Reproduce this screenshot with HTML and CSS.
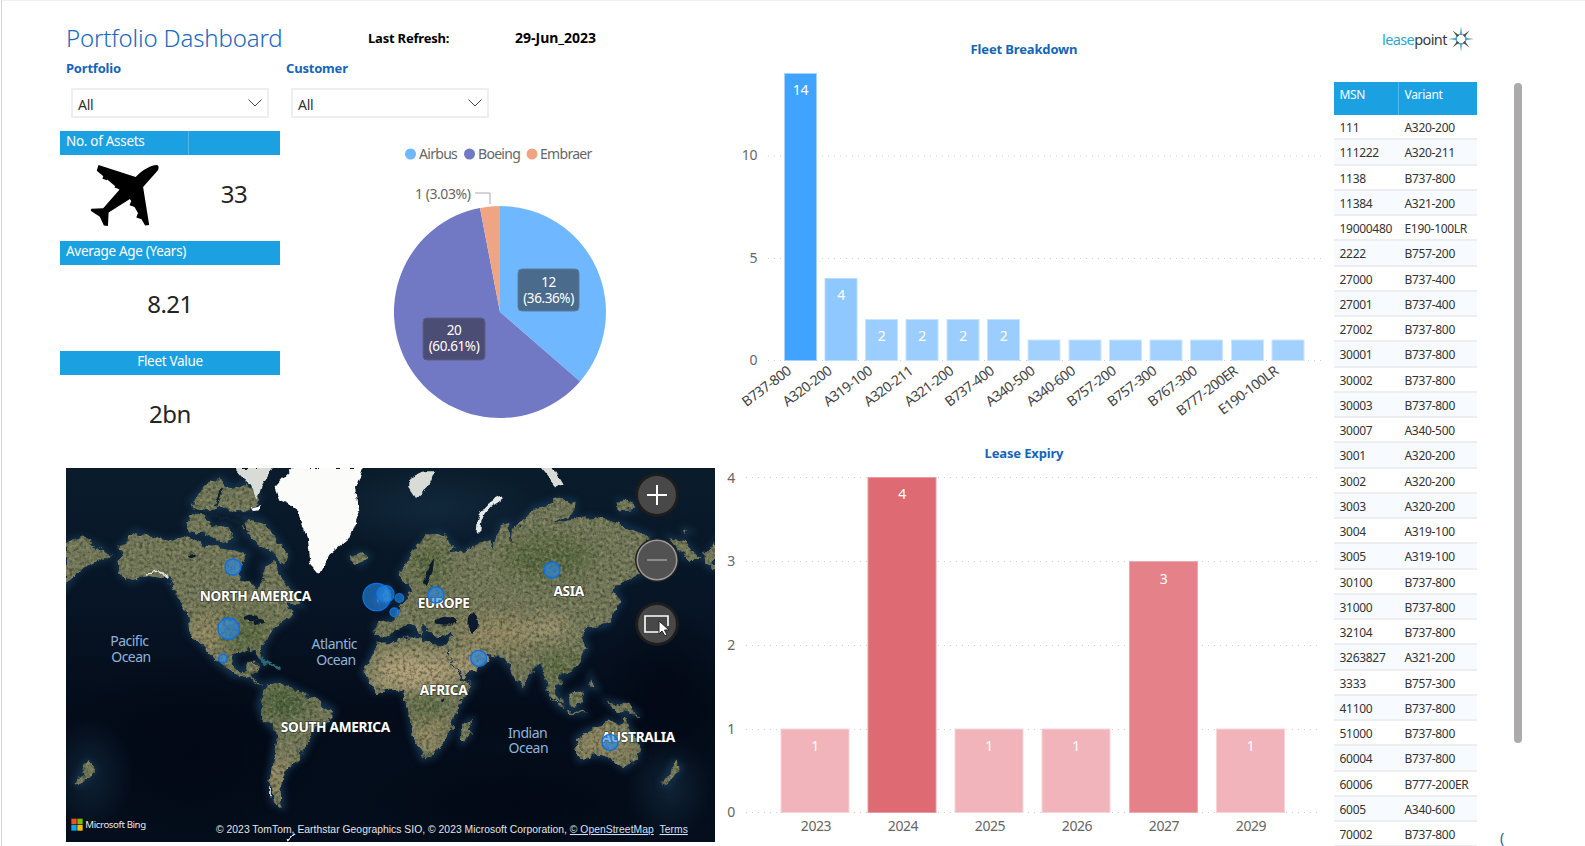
FILE: index.html
```html
<!DOCTYPE html>
<html lang="en">
<head>
<meta charset="utf-8">
<title>Portfolio Dashboard</title>
<link rel="stylesheet" href="styles.css">
</head>
<body>
<div class="page">
  <section class="left">
    <header class="head">
      <h1 class="title">Portfolio Dashboard</h1>
      <div class="refresh-label">Last Refresh:</div>
      <div class="refresh-date">29-Jun_2023</div>
    </header>
    <div class="filters">
      <div class="filter">
        <div class="filter-label">Portfolio</div>
        <div class="dropdown"><span>All</span>
          <svg class="chev" viewBox="0 0 14 8"><path d="M0.5 0.5 L7 7 L13.5 0.5"/></svg></div>
      </div>
      <div class="filter">
        <div class="filter-label">Customer</div>
        <div class="dropdown"><span>All</span>
          <svg class="chev" viewBox="0 0 14 8"><path d="M0.5 0.5 L7 7 L13.5 0.5"/></svg></div>
      </div>
    </div>
    <div class="mid-row">
      <div class="kpis">
        <div class="kpi-bar split"><span class="cell-a">No. of Assets</span><span class="cell-b"></span></div>
        <div class="kpi-body split-body">
          <div class="plane-cell">
            <svg class="plane" viewBox="90 100 210 190">
              <path d="M290 105 C298 105 298 118 290 125 L250 170 L268 282 L256 284 L211 205 L148 245 L146 285 L134 284 L122 258 L95 240 L97 234 L132 233 L180 178 L113 122 L118 105 L228 140 C250 118 275 105 290 105Z"/>
              <rect x="132" y="132" width="14" height="16" transform="rotate(20 139 140)"/>
              <rect x="168" y="158" width="14" height="16" transform="rotate(20 175 166)"/>
              <rect x="212" y="214" width="16" height="13" transform="rotate(20 220 220)"/>
              <rect x="232" y="250" width="16" height="13" transform="rotate(20 240 256)"/>
            </svg>
          </div>
          <div class="kpi-val side">33</div>
        </div>
        <div class="kpi-bar">Average Age (Years)</div>
        <div class="kpi-body"><div class="kpi-val">8.21</div></div>
        <div class="kpi-bar center">Fleet Value</div>
        <div class="kpi-body"><div class="kpi-val">2bn</div></div>
      </div>
      <svg class="pie" viewBox="290 131 330 330">
        <circle class="lg-a" cx="410.500" cy="154" r="5.500"/>
        <text class="legend" x="419" y="159">Airbus</text>
        <circle class="lg-b" cx="469.500" cy="154" r="5.500"/>
        <text class="legend" x="478" y="159">Boeing</text>
        <circle class="lg-c" cx="532" cy="154" r="5.500"/>
        <text class="legend" x="540" y="159">Embraer</text>
        <text class="legend wide" x="415" y="199">1 (3.03%)</text>
        <path class="leader" d="M475 193 H490 V204"/>
        <path class="lg-a" d="M500 312 V206 A106 106 0 0 1 580.100 381.400 Z"/>
        <path class="lg-b" d="M500 312 L580.100 381.400 A106 106 0 1 1 480 207.900 Z"/>
        <path class="lg-c" d="M500 312 L480 207.900 A106 106 0 0 1 500 206 Z"/>
        <rect class="tag-a" x="518" y="269" width="61" height="42" rx="4"/>
        <text class="tag" x="548.500" y="287">12</text>
        <text class="tag" x="548.500" y="303">(36.36%)</text>
        <rect class="tag-b" x="423" y="318" width="62" height="42" rx="4"/>
        <text class="tag" x="454" y="335">20</text>
        <text class="tag" x="454" y="351">(60.61%)</text>
      </svg>
    </div>
    <div class="map">
      <svg class="map-svg" viewBox="0 0 1947 1122">
        <defs>
          <linearGradient id="ocean" x1="0" y1="0" x2="0" y2="1">
            <stop offset="0" stop-color="#0a1c2b"/>
            <stop offset=".35" stop-color="#071526"/>
            <stop offset=".65" stop-color="#040c1a"/>
            <stop offset="1" stop-color="#040e1c"/>
          </linearGradient>
          <radialGradient id="deep">
            <stop offset="0" stop-color="#020814" stop-opacity=".9"/>
            <stop offset="1" stop-color="#020814" stop-opacity="0"/>
          </radialGradient>
          <radialGradient id="teal">
            <stop offset="0" stop-color="#17344a" stop-opacity=".55"/>
            <stop offset="1" stop-color="#17344a" stop-opacity="0"/>
          </radialGradient>
          <filter id="soft" filterUnits="userSpaceOnUse" x="0" y="0" width="1947" height="1122" color-interpolation-filters="sRGB"><feGaussianBlur stdDeviation="28"/></filter>
          <filter id="shelfblur" filterUnits="userSpaceOnUse" x="0" y="0" width="1947" height="1122" color-interpolation-filters="sRGB"><feGaussianBlur stdDeviation="9"/></filter>
          <filter id="rough" filterUnits="userSpaceOnUse" x="0" y="0" width="1947" height="1122" color-interpolation-filters="sRGB">
            <feTurbulence type="fractalNoise" baseFrequency=".03" numOctaves="4" seed="3" result="t"/>
            <feDisplacementMap in="SourceGraphic" in2="t" scale="34" xChannelSelector="R" yChannelSelector="G" result="d"/>
            <feTurbulence type="fractalNoise" baseFrequency=".1" numOctaves="3" seed="11" result="g"/>
            <feColorMatrix in="g" type="matrix" values="0 0 0 0 0.17  0 0 0 0 0.20  0 0 0 0 0.12  1.5 0 0 0 -0.62" result="dk"/>
            <feComposite in="dk" in2="d" operator="in" result="dark"/>
            <feColorMatrix in="g" type="matrix" values="0 0 0 0 0.72  0 0 0 0 0.68  0 0 0 0 0.52  0 1.1 0 0 -0.48" result="lt"/>
            <feComposite in="lt" in2="d" operator="in" result="light"/>
            <feMerge result="m"><feMergeNode in="d"/><feMergeNode in="dark"/><feMergeNode in="light"/></feMerge>
            <feGaussianBlur in="m" stdDeviation="2"/>
          </filter>
          <filter id="rough-s" filterUnits="userSpaceOnUse" x="0" y="0" width="1947" height="1122" color-interpolation-filters="sRGB">
            <feTurbulence type="fractalNoise" baseFrequency=".04" numOctaves="3" seed="5" result="t"/>
            <feDisplacementMap in="SourceGraphic" in2="t" scale="18" xChannelSelector="R" yChannelSelector="G" result="d"/>
            <feGaussianBlur in="d" stdDeviation="2"/>
          </filter>
          <path id="land" d="M160 240 L205 190 L250 205 L310 222 L360 208 L420 230 L480 240 L545 255 L525 300 L522 340 L580 365 L598 330 L590 295 L625 280 L650 330 L680 370 L705 412 L660 402 L680 440 L625 480 L590 535 L592 575 L570 540 L545 545 L495 552 L505 590 L530 615 L545 590 L580 590 L552 625 L590 655 L545 628 L500 620 L450 580 L415 540 L370 490 L362 430 L330 370 L300 325 L245 318 L200 340 L165 322 L155 290 L175 255 Z
          M360 165 L385 135 L420 150 L440 180 L480 170 L510 215 L470 225 L420 200 L375 190 Z
          M375 100 L400 75 L430 50 L460 30 L500 60 L540 40 L580 85 L560 125 L520 135 L480 120 L430 130 L390 120 Z
          M535 150 L590 160 L620 200 L665 260 L655 290 L620 260 L570 225 L535 190 Z
          M855 265 L885 255 L908 265 L890 288 L865 280 Z
          M0 225 L40 210 L90 230 L135 265 L100 275 L60 290 L25 320 L0 355 Z
          M1810 210 L1855 220 L1900 270 L1855 270 L1835 240 Z
          M1915 270 L1947 225 L1947 300 L1930 295 Z
          M600 646 L640 641 L700 671 L760 701 L802 726 L790 756 L740 791 L710 861 L660 906 L645 946 L650 1016 L620 1001 L610 941 L625 851 L635 796 L590 751 L578 711 Z
          M915 570 L895 600 L890 611 L930 669 L975 661 L1015 671 L1035 761 L1040 801 L1070 873 L1105 861 L1150 801 L1160 761 L1180 711 L1223 646 L1185 636 L1145 561 L1145 535 L1075 520 L1035 505 L975 525 L930 530 Z
          M930 500 L928 470 L975 458 L990 440 L1010 400 L1025 375 L1045 370 L1000 320 L1035 260 L1085 200 L1125 195 L1170 240 L1145 258 L1190 250 L1265 215 L1280 235 L1305 170 L1330 165 L1335 240 L1340 195 L1370 155 L1405 120 L1475 95 L1525 100 L1525 130 L1455 160 L1585 150 L1665 170 L1755 205 L1715 270 L1725 320 L1665 340 L1645 370 L1665 400 L1625 470 L1575 480 L1545 500 L1565 540 L1545 570 L1505 621 L1480 611 L1485 650 L1465 661 L1500 711 L1445 671 L1425 591 L1400 600 L1370 661 L1335 601 L1305 566 L1270 561 L1260 581 L1190 633 L1150 566 L1145 530 L1170 505 L1105 500 L1085 490 L1065 470 L1070 505 L1035 470 L1010 470 L985 480 L970 505 Z
          M1200 761 L1218 756 L1210 801 L1190 823 L1185 796 Z
          M1530 811 L1565 786 L1605 776 L1630 756 L1665 776 L1675 751 L1720 831 L1715 871 L1675 901 L1640 871 L1585 861 L1540 876 Z
          M1625 701 L1675 711 L1720 741 L1685 736 L1655 731 Z
          M1440 661 L1495 726 L1475 711 Z M1505 726 L1565 736 L1510 735 Z M1510 681 L1555 666 L1545 706 L1515 711 Z M1575 631 L1590 661 L1572 655 Z
          M1825 881 L1845 901 L1805 951 L1790 946 Z M65 881 L85 906 L40 951 L30 941 Z
          M945 385 L965 360 L975 395 L955 410 Z M930 395 L942 392 L940 410 Z
          M1660 100 L1700 105 L1710 125 L1665 130 Z M1855 185 L1870 190 L1855 195 Z"/>
          <clipPath id="landclip"><use href="#land"/></clipPath>
        </defs>
        <rect width="1947" height="1122" fill="url(#ocean)"/>
        <ellipse cx="380" cy="860" rx="420" ry="300" fill="url(#deep)"/>
        <ellipse cx="1350" cy="1010" rx="500" ry="170" fill="url(#deep)"/>
        <ellipse cx="1800" cy="680" rx="220" ry="260" fill="url(#deep)"/>
        <ellipse cx="70" cy="920" rx="130" ry="170" fill="url(#teal)"/>
        <ellipse cx="1810" cy="960" rx="130" ry="150" fill="url(#teal)"/>
        <ellipse cx="1100" cy="120" rx="360" ry="130" fill="url(#teal)"/>
        <use href="#land" class="shelf" filter="url(#shelfblur)"/>
        <g filter="url(#rough)">
          <use href="#land" class="land-base"/>
          <g clip-path="url(#landclip)">
            <g filter="url(#soft)">
              <ellipse class="p-tan" cx="1040" cy="610" rx="130" ry="60"/>
              <ellipse class="p-tan" cx="1205" cy="590" rx="50" ry="38"/>
              <ellipse class="p-dry" cx="1300" cy="495" rx="120" ry="45"/>
              <ellipse class="p-dry" cx="1620" cy="825" rx="85" ry="45"/>
              <ellipse class="p-dry" cx="420" cy="500" rx="50" ry="60"/>
              <ellipse class="p-dry" cx="1090" cy="800" rx="45" ry="50"/>
              <ellipse class="p-dry" cx="640" cy="925" rx="30" ry="70"/>
              <ellipse class="p-green" cx="655" cy="705" rx="70" ry="45"/>
              <ellipse class="p-green" cx="1085" cy="715" rx="45" ry="28"/>
              <ellipse class="p-olive" cx="540" cy="500" rx="70" ry="50"/>
              <ellipse class="p-olive" cx="1450" cy="270" rx="130" ry="60"/>
              <ellipse class="p-olive" cx="1475" cy="600" rx="55" ry="45"/>
              <ellipse class="p-olive" cx="1090" cy="290" rx="50" ry="60"/>
              <ellipse class="p-tan" cx="1450" cy="480" rx="60" ry="25"/>
            </g>
          </g>
        </g>
        <g filter="url(#rough-s)">
          <path class="channel" d="M430 140 L525 160 L510 205 M385 130 L555 140 M520 135 L545 190 M470 60 L450 115"/>
          <path class="snow" d="M625 60 L660 20 L680 0 L890 0 L870 60 L880 130 L850 210 L790 260 L760 320 L735 290 L725 210 L690 120 L640 95 Z"/>
          <path class="snow-dim" d="M505 0 L620 0 L585 60 L575 95 L555 50 L530 30 Z"/>
          <path class="snow" d="M555 118 L582 112 L582 130 L560 132 Z"/>
          <path class="snow-dim" d="M1030 30 L1075 10 L1105 10 L1085 60 L1050 90 L1030 60 Z"/>
          <path class="snow-dim" d="M1425 0 L1460 0 L1490 50 L1470 55 Z"/>
          <path class="snow-line" d="M1308 90 C1270 105 1240 130 1237 190"/>
          <path class="snow-thin" d="M240 318 L280 312 L310 330"/>
          <path class="snow-thin" d="M612 955 V985"/>
          <path class="snow-thin" d="M660 1118 L690 1100"/>
          <path class="cuba" d="M578 568 L640 600 M590 575 L600 590"/>
          <path class="sea-fill" d="M1070 345 L1090 290 L1105 270 L1100 310 L1082 352 Z"/>
          <ellipse class="sea-fill" cx="1140" cy="460" rx="32" ry="13"/>
          <ellipse class="sea-fill" cx="1220" cy="465" rx="13" ry="30"/>
          <ellipse class="sea-fill" cx="555" cy="450" rx="22" ry="10"/>
          <ellipse class="sea-fill" cx="580" cy="462" rx="14" ry="8"/>
          <ellipse class="sea-fill" cx="380" cy="262" rx="13" ry="6"/>
          <ellipse class="sea-fill" cx="1130" cy="697" rx="5" ry="6"/>
        </g>
        <text class="m-sea" x="190" y="534">Pacific</text>
        <text class="m-sea" x="195" y="583">Ocean</text>
        <text class="m-sea" x="805" y="544">Atlantic</text>
        <text class="m-sea" x="810" y="590">Ocean</text>
        <text class="m-sea" x="1385" y="811">Indian</text>
        <text class="m-sea" x="1387" y="855">Ocean</text>
        <text class="m-land" x="568" y="399">NORTH AMERICA</text>
        <text class="m-land" x="1133" y="419">EUROPE</text>
        <text class="m-land" x="1508" y="385">ASIA</text>
        <text class="m-land" x="1133" y="681">AFRICA</text>
        <text class="m-land" x="808" y="791">SOUTH AMERICA</text>
        <text class="m-land" x="1717" y="821">AUSTRALIA</text>
        <circle class="bub" cx="501" cy="297" r="24"/>
        <circle class="bub" cx="488" cy="482" r="32"/>
        <circle class="bub" cx="471" cy="572" r="13"/>
        <circle class="bub" cx="932" cy="387" r="41"/>
        <circle class="bub" cx="958" cy="378" r="26"/>
        <circle class="bub" cx="1000" cy="390" r="13"/>
        <circle class="bub" cx="985" cy="433" r="13"/>
        <circle class="bub" cx="1110" cy="381" r="24"/>
        <circle class="bub" cx="1458" cy="306" r="24"/>
        <circle class="bub" cx="1238" cy="571" r="24"/>
        <circle class="bub" cx="1632" cy="823" r="24"/>
        <rect class="ms-r" x="16" y="1052" width="16" height="17"/>
        <rect class="ms-g" x="34" y="1052" width="16" height="17"/>
        <rect class="ms-b" x="16" y="1071" width="16" height="17"/>
        <rect class="ms-y" x="34" y="1071" width="16" height="17"/>
        <text class="m-bing" x="58" y="1081">Microsoft Bing</text>
        <text class="m-copy" x="450" y="1095">© 2023 TomTom, Earthstar Geographics SIO, © 2023 Microsoft Corporation, <tspan class="m-link">© OpenStreetMap</tspan>  <tspan class="m-link">Terms</tspan></text>
      </svg>
      <div class="map-controls">
        <div class="map-btn">
          <svg viewBox="-19 -19 38 38"><path class="ic" d="M-10 0 H10 M0 -10 V10"/></svg>
        </div>
        <div class="map-btn off">
          <svg viewBox="-19 -19 38 38"><path class="ic-off" d="M-10 0 H10"/></svg>
        </div>
        <div class="map-btn">
          <svg viewBox="-19 -19 38 38"><path class="ic-thin" d="M3 8 H-12 V-8 H11 V2"/><path class="ic-arrow" d="M2 -3 L2 10 L5 7 L8 12 L10 11 L7.500 6 L12 6 Z"/></svg>
        </div>
      </div>
    </div>
  </section>

  <section class="charts">
    <svg class="chart-a" viewBox="725 1 600 439">
      <text class="chart-title" x="1024" y="54">Fleet Breakdown</text>
      <path class="grid" d="M768 156 H1321 M768 258.500 H1321 M768 360.500 H1321"/>
      <text class="axis end" x="757" y="160">10</text>
      <text class="axis end" x="757" y="263">5</text>
      <text class="axis end" x="757" y="365">0</text>
      <rect class="b14" x="784.500" y="73.500" width="32" height="287"/>
      <rect class="b4" x="825" y="278.500" width="32" height="82"/>
      <rect class="b2" x="865.500" y="319.500" width="32" height="41"/>
      <rect class="b2" x="906" y="319.500" width="32" height="41"/>
      <rect class="b2" x="947" y="319.500" width="32" height="41"/>
      <rect class="b2" x="987.500" y="319.500" width="32" height="41"/>
      <rect class="b1" x="1028" y="340" width="32" height="20.500"/>
      <rect class="b1" x="1069" y="340" width="32" height="20.500"/>
      <rect class="b1" x="1109.500" y="340" width="32" height="20.500"/>
      <rect class="b1" x="1150" y="340" width="32" height="20.500"/>
      <rect class="b1" x="1190.500" y="340" width="32" height="20.500"/>
      <rect class="b1" x="1231.500" y="340" width="32" height="20.500"/>
      <rect class="b1" x="1272" y="340" width="32" height="20.500"/>
      <text class="val" x="800.500" y="95">14</text>
      <text class="val" x="841" y="300">4</text>
      <text class="val" x="881.500" y="341">2</text>
      <text class="val" x="922" y="341">2</text>
      <text class="val" x="963" y="341">2</text>
      <text class="val" x="1003.500" y="341">2</text>
      <text class="xrot" transform="translate(792 373) rotate(-37)">B737-800</text>
      <text class="xrot" transform="translate(832.600 373) rotate(-37)">A320-200</text>
      <text class="xrot" transform="translate(873.200 373) rotate(-37)">A319-100</text>
      <text class="xrot" transform="translate(913.800 373) rotate(-37)">A320-211</text>
      <text class="xrot" transform="translate(954.400 373) rotate(-37)">A321-200</text>
      <text class="xrot" transform="translate(995 373) rotate(-37)">B737-400</text>
      <text class="xrot" transform="translate(1035.600 373) rotate(-37)">A340-500</text>
      <text class="xrot" transform="translate(1076.200 373) rotate(-37)">A340-600</text>
      <text class="xrot" transform="translate(1116.800 373) rotate(-37)">B757-200</text>
      <text class="xrot" transform="translate(1157.400 373) rotate(-37)">B757-300</text>
      <text class="xrot" transform="translate(1198 373) rotate(-37)">B767-300</text>
      <text class="xrot" transform="translate(1238.600 373) rotate(-37)">B777-200ER</text>
      <text class="xrot" transform="translate(1279.200 373) rotate(-37)">E190-100LR</text>
    </svg>
    <svg class="chart-b" viewBox="725 440 600 405">
      <text class="chart-title" x="1024" y="458">Lease Expiry</text>
      <path class="grid" d="M746 477.500 H1321 M746 561.500 H1321 M746 645.500 H1321 M746 729.500 H1321 M746 812.500 H1321"/>
      <text class="axis mid" x="731" y="483">4</text>
      <text class="axis mid" x="731" y="566">3</text>
      <text class="axis mid" x="731" y="650">2</text>
      <text class="axis mid" x="731" y="734">1</text>
      <text class="axis mid" x="731" y="817">0</text>
      <rect class="r1" x="781" y="729" width="68" height="83.500"/>
      <rect class="r4" x="868" y="477.500" width="68" height="335"/>
      <rect class="r1" x="955" y="729" width="68" height="83.500"/>
      <rect class="r1" x="1042" y="729" width="68" height="83.500"/>
      <rect class="r3" x="1129.500" y="561.500" width="68" height="251"/>
      <rect class="r1" x="1216.500" y="729" width="68" height="83.500"/>
      <text class="val" x="815" y="751">1</text>
      <text class="val" x="902" y="499">4</text>
      <text class="val" x="989" y="751">1</text>
      <text class="val" x="1076" y="751">1</text>
      <text class="val" x="1163.500" y="584">3</text>
      <text class="val" x="1250.500" y="751">1</text>
      <text class="axis mid" x="816" y="831">2023</text>
      <text class="axis mid" x="903" y="831">2024</text>
      <text class="axis mid" x="990" y="831">2025</text>
      <text class="axis mid" x="1077" y="831">2026</text>
      <text class="axis mid" x="1164" y="831">2027</text>
      <text class="axis mid" x="1251" y="831">2029</text>
    </svg>
  </section>

  <section class="right">
    <div class="logo">
      <span class="logo-text"><span class="logo-a">lease</span><span class="logo-b">point</span></span>
      <svg class="logo-star" viewBox="-13 -13 26 26">
        <circle class="ring" r="5"/>
        <g class="ray-a">
          <path d="M0 -13 L1.200 -4 L-1.200 -4 Z"/>
          <path d="M0 -13 L1.200 -4 L-1.200 -4 Z" transform="rotate(90)"/>
          <path d="M0 -13 L1.200 -4 L-1.200 -4 Z" transform="rotate(180)"/>
          <path d="M0 -13 L1.200 -4 L-1.200 -4 Z" transform="rotate(270)"/>
        </g>
        <g class="ray-b">
          <path d="M0 -12 L1.200 -4 L-1.200 -4 Z" transform="rotate(45)"/>
          <path d="M0 -12 L1.200 -4 L-1.200 -4 Z" transform="rotate(135)"/>
          <path d="M0 -12 L1.200 -4 L-1.200 -4 Z" transform="rotate(225)"/>
          <path d="M0 -12 L1.200 -4 L-1.200 -4 Z" transform="rotate(315)"/>
        </g>
      </svg>
    </div>
    <div class="table-row">
      <div class="tbl">
        <div class="tr th"><div>MSN</div><div>Variant</div></div>
        <div class="tr"><div>111</div><div>A320-200</div></div>
        <div class="tr"><div>111222</div><div>A320-211</div></div>
        <div class="tr"><div>1138</div><div>B737-800</div></div>
        <div class="tr"><div>11384</div><div>A321-200</div></div>
        <div class="tr"><div>19000480</div><div>E190-100LR</div></div>
        <div class="tr"><div>2222</div><div>B757-200</div></div>
        <div class="tr"><div>27000</div><div>B737-400</div></div>
        <div class="tr"><div>27001</div><div>B737-400</div></div>
        <div class="tr"><div>27002</div><div>B737-800</div></div>
        <div class="tr"><div>30001</div><div>B737-800</div></div>
        <div class="tr"><div>30002</div><div>B737-800</div></div>
        <div class="tr"><div>30003</div><div>B737-800</div></div>
        <div class="tr"><div>30007</div><div>A340-500</div></div>
        <div class="tr"><div>3001</div><div>A320-200</div></div>
        <div class="tr"><div>3002</div><div>A320-200</div></div>
        <div class="tr"><div>3003</div><div>A320-200</div></div>
        <div class="tr"><div>3004</div><div>A319-100</div></div>
        <div class="tr"><div>3005</div><div>A319-100</div></div>
        <div class="tr"><div>30100</div><div>B737-800</div></div>
        <div class="tr"><div>31000</div><div>B737-800</div></div>
        <div class="tr"><div>32104</div><div>B737-800</div></div>
        <div class="tr"><div>3263827</div><div>A321-200</div></div>
        <div class="tr"><div>3333</div><div>B757-300</div></div>
        <div class="tr"><div>41100</div><div>B737-800</div></div>
        <div class="tr"><div>51000</div><div>B737-800</div></div>
        <div class="tr"><div>60004</div><div>B737-800</div></div>
        <div class="tr"><div>60006</div><div>B777-200ER</div></div>
        <div class="tr"><div>6005</div><div>A340-600</div></div>
        <div class="tr"><div>70002</div><div>B737-800</div></div>
      </div>
      <div class="scroll-thumb"></div>
    </div>
    <span class="stray">(</span>
  </section>
</div>
</body>
</html>
```

FILE: styles.css
```css
* { box-sizing: border-box; }
html, body { margin: 0; padding: 0; background: #fff; }
body { font-family: "Noto Sans", "Open Sans", sans-serif; color: #252423; overflow: hidden; }
svg text { font-family: "Noto Sans", "Open Sans", sans-serif; }

.page {
  display: flex;
  width: 1584px;
  height: 846px;
  margin-left: 1px;
  border-left: 1px solid #d4d4d4;
  border-top: 1px solid #efefef;
  overflow: hidden;
}

/* left column */
.left { width: 723px; flex: none; padding: 21px 0 0 58px; }
.head { display: flex; align-items: center; height: 32px; padding-left: 6px; }
.title { margin: 0; width: 302px; flex: none; font-size: 24px; font-weight: 300; line-height: 32px; letter-spacing: -0.15px; color: #1c69bd; white-space: nowrap; }
.refresh-label { width: 147px; flex: none; font-size: 13px; font-weight: 700; letter-spacing: -0.2px; color: #000; }
.refresh-date { font-size: 14px; font-weight: 700; color: #000; margin-top: -2px; }

.filters { display: flex; padding-left: 6px; margin-top: 6px; }
.filter { width: 220px; flex: none; }
.filter-label { height: 16px; line-height: 16px; font-size: 13px; font-weight: 700; letter-spacing: -0.2px; color: #1565b8; }
.dropdown { display: flex; align-items: center; justify-content: space-between; width: 198px; height: 30px; margin: 12px 0 0 5px; padding: 0 5.5px 0 5px; border: 2px solid #eeeeee; font-size: 14px; letter-spacing: -0.3px; color: #333; }
.dropdown span { padding-top: 3px; }
.chev { width: 14px; height: 8px; margin-top: -1px; }
.chev path { fill: none; stroke: #444; stroke-width: 1; }

.mid-row { display: flex; gap: 10px; margin-top: 13px; }
.kpis { width: 220px; flex: none; }
.kpi-bar { height: 24px; line-height: 20px; padding-left: 6px; background: #1ba1e2; color: #fff; font-size: 13.5px; letter-spacing: -0.3px; }
.kpi-bar.center { text-align: center; padding-left: 0; }
.kpi-bar.split { display: flex; padding-left: 0; }
.cell-a { width: 129px; padding-left: 6px; border-right: 1px solid #55b8ea; }
.kpi-body { height: 86px; display: flex; align-items: center; justify-content: center; padding-bottom: 8px; }
.split-body { justify-content: flex-start; }
.plane-cell { width: 128px; display: flex; justify-content: center; padding-left: 1px; }
.plane { width: 71px; height: 65px; margin-top: 3px; }
.plane path, .plane rect { fill: #000; }
.kpi-val { font-size: 24px; line-height: 32px; letter-spacing: -0.5px; color: #252423; }
.kpi-val.side { width: 92px; text-align: center; }

.pie { width: 330px; height: 330px; flex: none; display: block; }
.lg-a { fill: #6fb8ff; }
.lg-b { fill: #7279c4; }
.lg-c { fill: #efa584; }
.legend { font-size: 14px; fill: #666; letter-spacing: -0.7px; }
.legend.wide { letter-spacing: -0.45px; }
.leader { fill: none; stroke: #aaa; stroke-width: 1; }
.tag-a { fill: #4a6b8c; stroke: #5d7d9c; }
.tag-b { fill: #4c4d74; stroke: #5c5d84; }
.tag { font-size: 13.5px; fill: #fff; text-anchor: middle; letter-spacing: -0.4px; }

/* map */
.map { position: relative; width: 649px; height: 374px; margin: 7px 0 0 6px; overflow: hidden; }
.map-svg { display: block; width: 649px; height: 374px; }
.shelf { fill: #14304a; stroke: #14304a; stroke-width: 16; }
.land-base { fill: #72785a; }
.p-tan { fill: #b5a37c; }
.p-dry { fill: #9a8d66; }
.p-green { fill: #3d5a33; }
.p-olive { fill: #55673f; }
.channel { fill: none; stroke: #0f2232; stroke-width: 7; }
.snow { fill: #fbfbf9; }
.snow-dim { fill: #d9dbd6; }
.snow-line { fill: none; stroke: #e6e9e9; stroke-width: 11; }
.snow-thin { fill: none; stroke: #e6e8e8; stroke-width: 5; }
.cuba { fill: none; stroke: #2b6878; stroke-width: 6; }
.sea-fill { fill: #0b1b2d; }
.m-sea { font-size: 42px; text-anchor: middle; fill: #8fb3d9; letter-spacing: -1.5px; }
.m-land { font-size: 41px; font-weight: 700; text-anchor: middle; fill: #fff; letter-spacing: -0.9px; paint-order: stroke; stroke: rgba(20, 25, 20, 0.55); stroke-width: 5px; }
.bub { fill: rgba(35, 135, 230, 0.62); stroke: #0f6fe0; stroke-width: 4; }
.ms-r { fill: #f25022; }
.ms-g { fill: #7fba00; }
.ms-b { fill: #00a4ef; }
.ms-y { fill: #ffb900; }
.m-bing { font-size: 29px; fill: #e8e8e8; letter-spacing: -1.2px; }
.m-copy { font-family: "Liberation Sans", sans-serif; font-size: 31px; fill: #e4e4e4; letter-spacing: 0.1px; white-space: pre; }
.m-link { fill: #cfe0f5; text-decoration: underline; }

.map-controls { position: absolute; left: 572px; top: 8px; display: flex; flex-direction: column; gap: 26.5px; }
.map-btn { width: 38px; height: 38px; border-radius: 50%; background: #484848; box-shadow: 0 0 0 3px #1d1d1d; }
.map-btn.off { background: #525252; box-shadow: 0 0 0 1.5px #9a9a9a, 0 0 0 3px #222; }
.map-btn svg { display: block; width: 38px; height: 38px; }
.ic { fill: none; stroke: #fff; stroke-width: 2; }
.ic-off { fill: none; stroke: #8b8b8b; stroke-width: 2; }
.ic-thin { fill: none; stroke: #fff; stroke-width: 1.6; }
.ic-arrow { fill: #fff; stroke: #222; stroke-width: 1; }

/* charts */
.charts { width: 600px; flex: none; }
.chart-a { display: block; width: 600px; height: 439px; }
.chart-b { display: block; width: 600px; height: 405px; }
.chart-title { font-size: 13px; font-weight: 700; fill: #1565b8; text-anchor: middle; letter-spacing: -0.15px; }
.grid { fill: none; stroke: #cfcfcf; stroke-width: 1; stroke-dasharray: 1 5; }
.axis { font-size: 14px; fill: #666; letter-spacing: -0.4px; }
.end { text-anchor: end; }
.mid { text-anchor: middle; }
.val { font-size: 14px; fill: #fff; text-anchor: middle; letter-spacing: -0.3px; }
.xrot { font-size: 14px; fill: #444; text-anchor: end; letter-spacing: -0.6px; }
.b14 { fill: #3fa3ff; stroke: #a5d3ff; }
.b4 { fill: #8fc7ff; stroke: #bcdeff; }
.b2 { fill: #9bcdff; stroke: #c6e3ff; }
.b1 { fill: #a3d1ff; stroke: #cce6ff; }
.r4 { fill: #de6a73; stroke: #eb9aa0; }
.r3 { fill: #e48189; stroke: #efaab0; }
.r1 { fill: #f0b4ba; stroke: #f7d4d7; }

/* right column */
.right { position: relative; flex: 1; padding: 26px 0 0 9px; }
.logo { display: flex; align-items: center; height: 24px; padding-left: 48px; gap: 1px; }
.logo-text { font-size: 14.5px; letter-spacing: -0.6px; line-height: 24px; }
.logo-a { color: #2ba6cb; }
.logo-b { color: #3a3a3a; }
.logo-star { width: 26px; height: 26px; }
.ray-a path { fill: #4aa9c8; }
.ray-b path { fill: #4a4a4a; }
.ring { fill: none; stroke: #5f8a9a; stroke-width: 1.2; }

.table-row { display: flex; align-items: flex-start; margin-top: 31px; }
.tbl { width: 143px; flex: none; font-size: 12px; letter-spacing: -0.3px; color: #333; }
.tr { display: grid; grid-template-columns: 65px 78px; height: 25.25px; line-height: 25px; border-bottom: 2px solid #eceef0; }
.tr > div { padding-left: 5.5px; white-space: nowrap; }
.tr:nth-child(odd) { background: #f7fbff; }
.tr.th { height: 33px; background: #1ba1e2; color: #fff; line-height: 26px; border-bottom: 0; }
.tr.th > div:first-child { border-right: 1px solid #55b8ea; }
.scroll-thumb { width: 8px; height: 660px; margin: 1px 0 0 37px; border-radius: 4px; background: #acaba9; flex: none; }
.stray { position: absolute; left: 175px; top: 830px; line-height: 14px; font-size: 14px; color: #1a5f8a; }
```
